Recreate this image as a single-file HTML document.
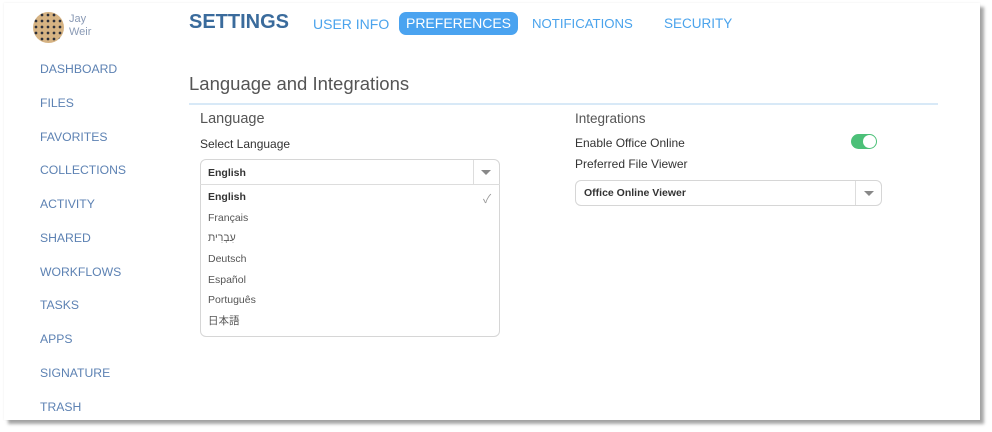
<!DOCTYPE html>
<html><head><meta charset="utf-8"><style>
*{margin:0;padding:0;box-sizing:border-box}
body{width:992px;height:432px;background:#fff;position:relative;overflow:hidden;font-family:"Liberation Sans","Noto Sans CJK JP",sans-serif}
.card{position:absolute;left:4px;top:3px;width:976px;height:417px;background:#fff;box-shadow:4px 4px 3px rgba(0,0,0,.35),0 0 2px rgba(0,0,0,.08)}
.a{position:absolute;white-space:nowrap}
.nav{left:40px;font-size:12.2px;color:#5d82b3}
.tab{font-size:14px;color:#4aa3ec;top:16px}
.item{left:208px;font-size:10.5px;color:#555}
</style></head><body>
<div class="card"></div>
<div class="a" style="left:33px;top:12px;width:31px;height:31px;border-radius:50%;background:radial-gradient(circle,#2c2f3a 30%,#d6b383 32%);background-size:6px 6px;background-color:#c9a676"></div>
<div class="a" style="left:69px;top:13px;font-size:11px;color:#8a9ab5;line-height:13px">Jay<br>Weir</div>
<div class="a nav" style="top:62px">DASHBOARD</div>
<div class="a nav" style="top:96px">FILES</div>
<div class="a nav" style="top:130px">FAVORITES</div>
<div class="a nav" style="top:163px">COLLECTIONS</div>
<div class="a nav" style="top:197px">ACTIVITY</div>
<div class="a nav" style="top:231px">SHARED</div>
<div class="a nav" style="top:265px">WORKFLOWS</div>
<div class="a nav" style="top:298px">TASKS</div>
<div class="a nav" style="top:332px">APPS</div>
<div class="a nav" style="top:366px">SIGNATURE</div>
<div class="a nav" style="top:400px">TRASH</div>
<div class="a" style="left:189px;top:11px;font-size:20px;font-weight:bold;color:#3a6b9c">SETTINGS</div>
<div class="a tab" style="left:313px">USER INFO</div>
<div class="a" style="left:399px;top:12px;width:119px;height:23px;border-radius:7px;background:#4aa3f0;color:#fff;font-size:14px;text-align:center;line-height:23px">PREFERENCES</div>
<div class="a tab" style="left:532px;font-size:13.2px;top:16px">NOTIFICATIONS</div>
<div class="a tab" style="left:664px;font-size:13.5px">SECURITY</div>
<div class="a" style="left:189px;top:73px;font-size:18.5px;color:#555">Language and Integrations</div>
<div class="a" style="left:189px;top:103px;width:749px;height:2px;background:#d8e9f7"></div>
<div class="a" style="left:200px;top:111px;font-size:14.5px;color:#555">Language</div>
<div class="a" style="left:200px;top:137px;font-size:12px;color:#333">Select Language</div>
<div class="a" style="left:200px;top:159px;width:300px;height:178px;border:1px solid #d6d6d6;border-radius:6px"></div>
<div class="a" style="left:200px;top:184px;width:300px;height:1px;background:#ddd"></div>
<div class="a" style="left:473px;top:160px;width:1px;height:24px;background:#ddd"></div>
<div class="a" style="left:481px;top:170px;width:0;height:0;border-left:5px solid transparent;border-right:5px solid transparent;border-top:5px solid #888"></div>
<div class="a item" style="top:167px;font-weight:bold;color:#333">English</div>
<div class="a item" style="top:191px;font-weight:bold;color:#333">English</div>
<div class="a" style="left:483px;top:190px;font-size:12px;color:#999">✓</div>
<div class="a item" style="top:212px">Français</div>
<div class="a item" style="top:232px">עִבְרִית</div>
<div class="a item" style="top:253px">Deutsch</div>
<div class="a item" style="top:274px">Español</div>
<div class="a item" style="top:294px">Português</div>
<div class="a item" style="top:313px">日本語</div>
<div class="a" style="left:575px;top:111px;font-size:13.5px;color:#555">Integrations</div>
<div class="a" style="left:575px;top:136px;font-size:12px;color:#333">Enable Office Online</div>
<div class="a" style="left:851px;top:134px;width:26px;height:15px;border-radius:8px;background:#4cc078"></div>
<div class="a" style="left:863px;top:135px;width:13px;height:13px;border-radius:50%;background:#fff"></div>
<div class="a" style="left:575px;top:157px;font-size:12px;color:#333">Preferred File Viewer</div>
<div class="a" style="left:575px;top:180px;width:307px;height:26px;border:1px solid #d6d6d6;border-radius:6px"></div>
<div class="a" style="left:855px;top:181px;width:1px;height:24px;background:#ddd"></div>
<div class="a" style="left:864px;top:191px;width:0;height:0;border-left:5px solid transparent;border-right:5px solid transparent;border-top:5px solid #888"></div>
<div class="a" style="left:584px;top:187px;font-size:10.5px;font-weight:bold;color:#333">Office Online Viewer</div>
</body></html>
